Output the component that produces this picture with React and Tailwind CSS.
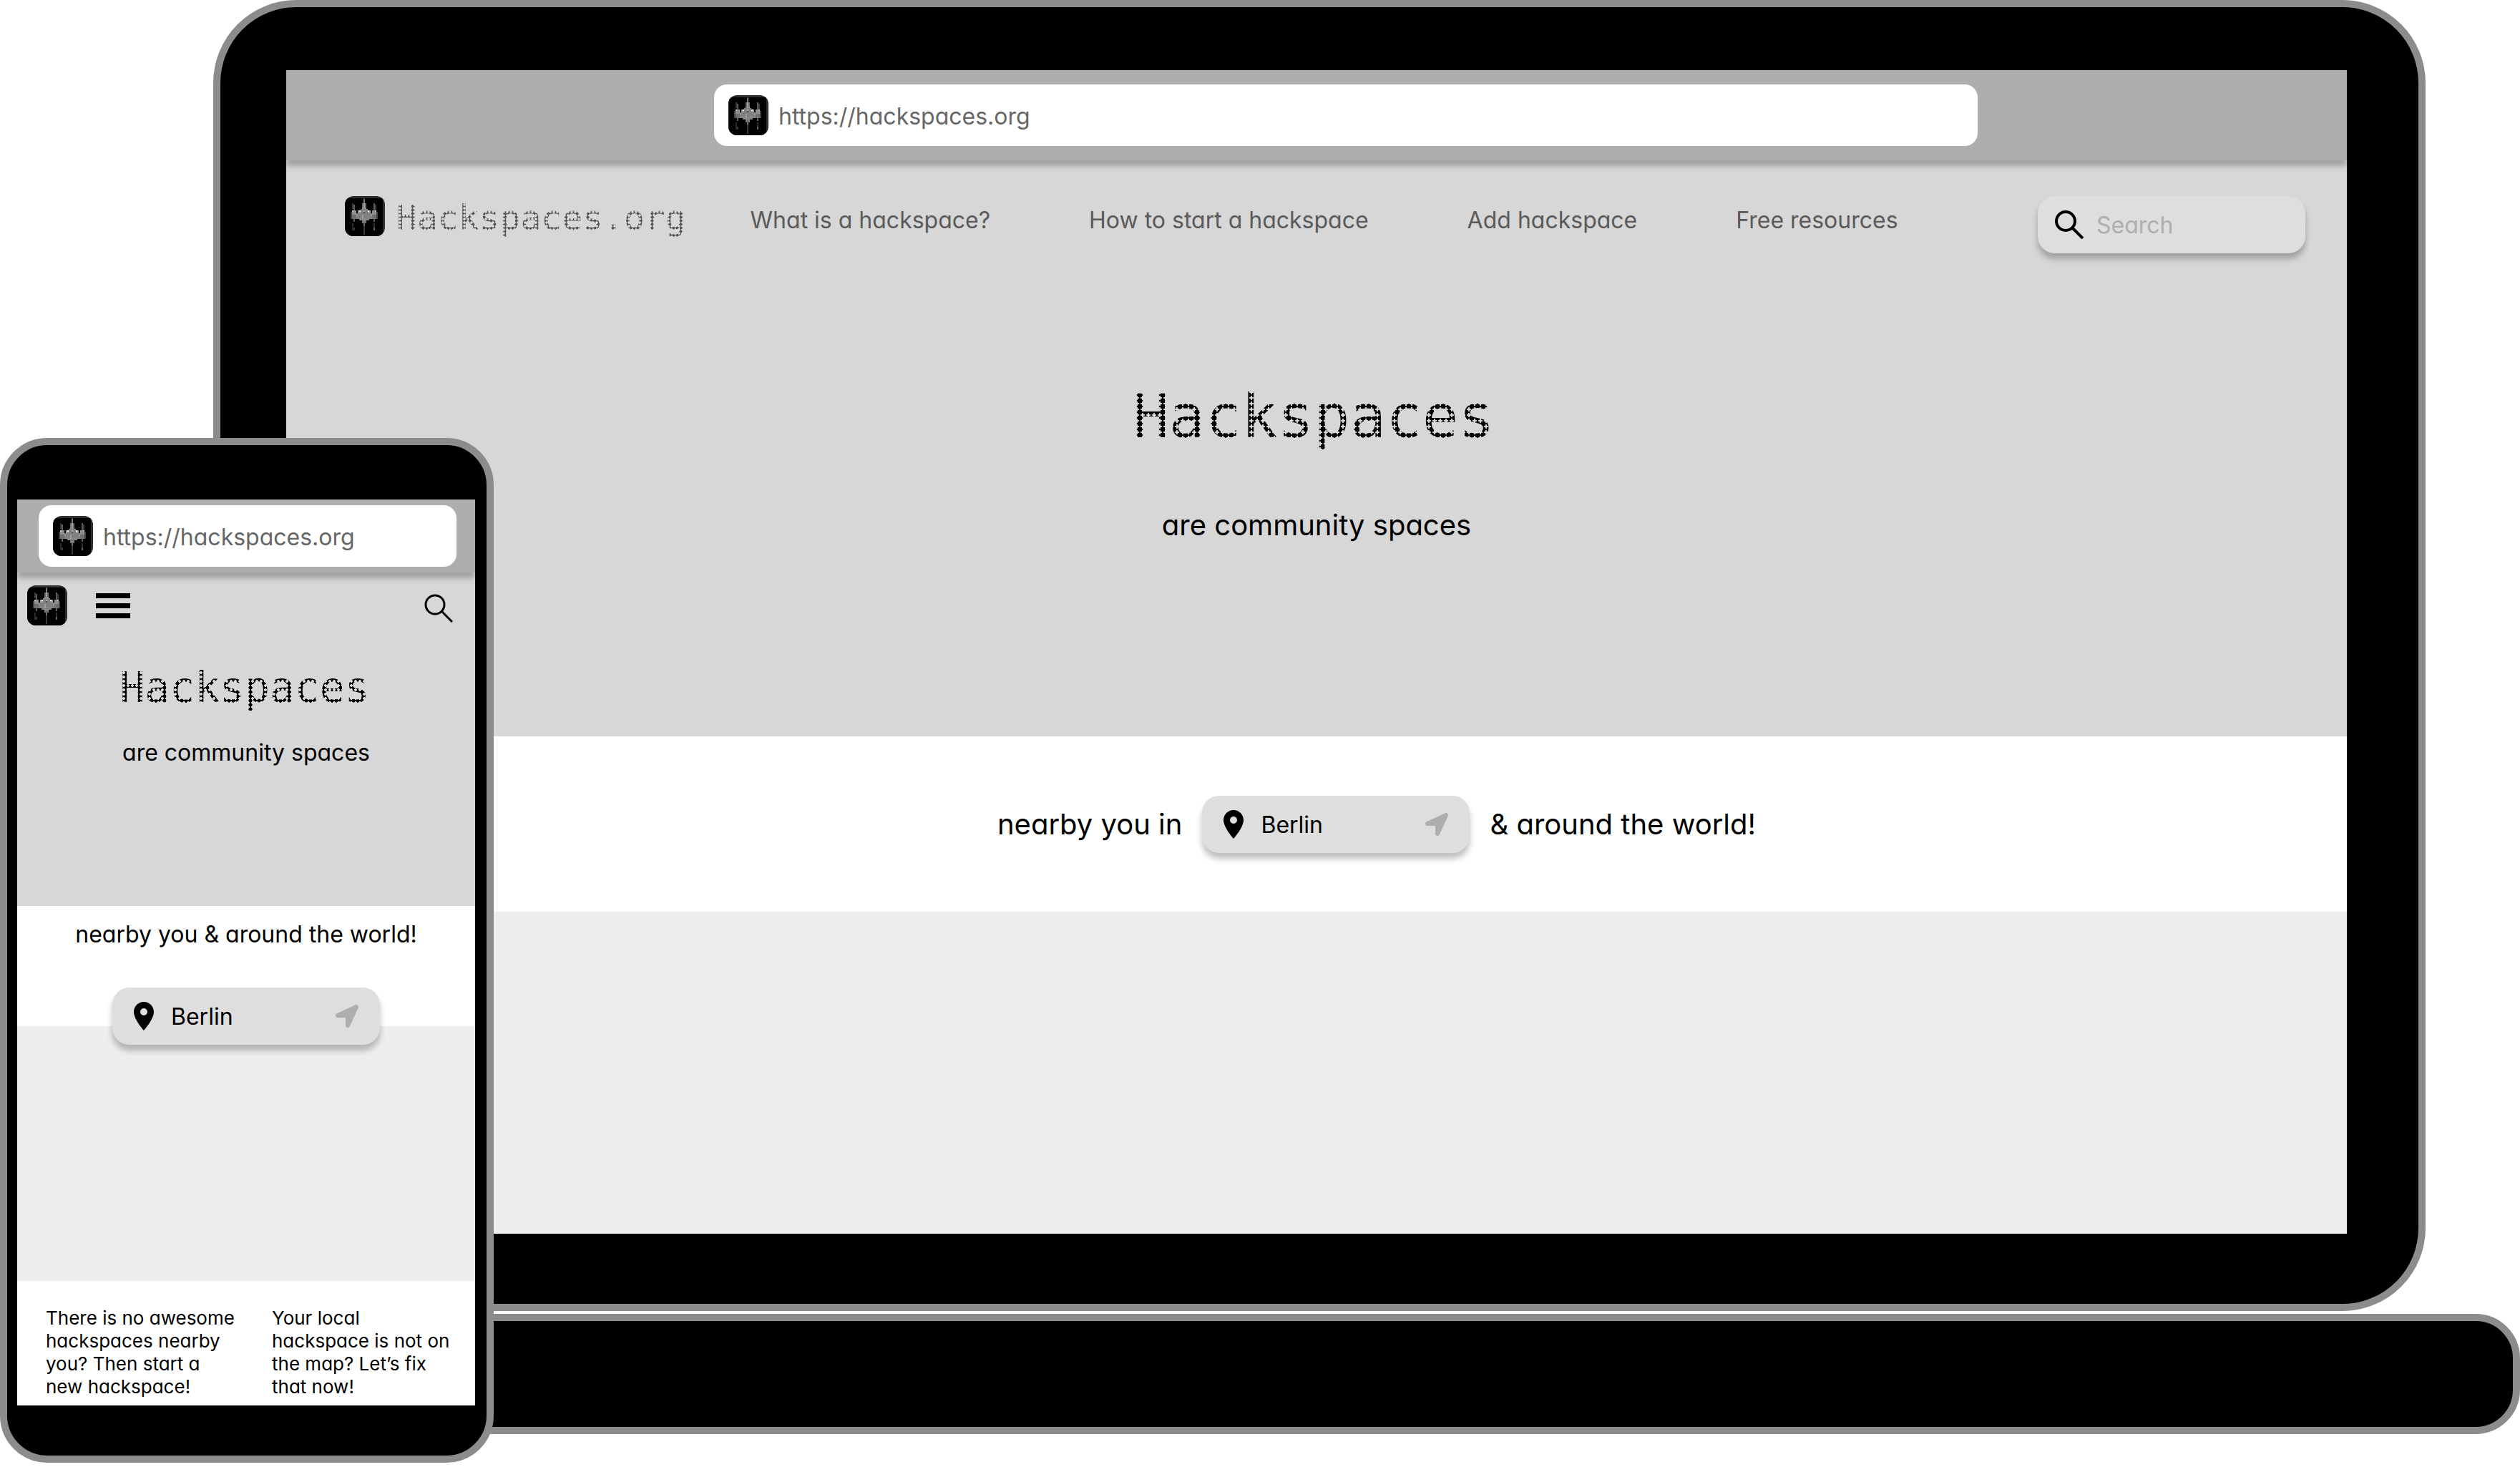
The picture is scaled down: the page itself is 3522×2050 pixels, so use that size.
const SHADOW = 'shadow-[0_8px_8px_rgba(0,0,0,0.25)]';

// Greyscale pixels of the logo mark: [x, y, width, height, fill]
const LOGO_PIXELS = [
  [13, 1, 1, 26, '#3a3837'],
  [13, 2, 1, 6, '#7b7b7b'],
  [12, 5, 3, 4, '#6c6c6c'],
  [13, 5, 1, 5, '#9c9c9c'],
  [12, 8, 3, 2, '#8d8d8d'],
  [11, 9, 5, 6, '#808080'],
  [12, 14, 3, 5, '#7a7a7a'],
  [13, 18, 1, 3, '#6a6a6a'],
  [5, 5, 1, 4, '#3a3a3a'],
  [6, 6, 1, 12, '#5c5c5c'],
  [20, 5, 1, 13, '#5c5c5c'],
  [21, 6, 1, 4, '#3a3a3a'],
  [5, 10, 3, 3, '#8e8e8e'],
  [19, 10, 3, 3, '#8e8e8e'],
  [4, 11, 1, 5, '#444444'],
  [22, 11, 1, 5, '#444444'],
  [5, 13, 3, 3, '#707070'],
  [19, 13, 3, 3, '#707070'],
  [8, 12, 3, 4, '#808080'],
  [16, 12, 3, 4, '#808080'],
  [9, 10, 2, 2, '#9c9c9c'],
  [16, 10, 2, 2, '#9c9c9c'],
  [10, 15, 7, 2, '#858585'],
  [10, 10, 1, 1, '#f0f0f0'],
  [16, 10, 1, 1, '#f0f0f0'],
  [5, 10, 1, 1, '#c5c5c5'],
  [21, 10, 1, 1, '#b5b5b5'],
  [13, 11, 1, 1, '#4d4d4d'],
  [13, 10, 1, 1, '#b0b0b0'],
  [8, 13, 1, 1, '#9a9a9a'],
  [18, 13, 1, 1, '#9a9a9a'],
  [12, 13, 1, 3, '#9e9e9e'],
  [5, 19, 1, 5, '#2c2c2c'],
  [6, 22, 1, 2, '#363636'],
  [20, 19, 1, 3, '#2c2c2c'],
  [20, 22, 1, 2, '#626262'],
];

function Logo() {
  return (
    <svg viewBox="0 0 28 28" className="size-14 shrink-0 rounded-xl" shapeRendering="crispEdges" aria-hidden="true">
      <rect width="28" height="28" fill="#2d2d2f" />
      <rect y="1.5" width="26.5" height="26.5" fill="#020202" />
      {LOGO_PIXELS.map(([x, y, w, h, fill], i) => (
        <rect key={i} x={x} y={y} width={w} height={h} fill={fill} />
      ))}
    </svg>
  );
}

function SearchIcon({ strokeWidth = 4 }) {
  return (
    <svg viewBox="0 0 40 40" className="size-10 shrink-0" fill="none" stroke="#000" strokeWidth={strokeWidth} aria-hidden="true">
      <circle cx="15" cy="15" r="13" />
      <path d="M24.5 24.5L39 39" />
    </svg>
  );
}

function AddressBar() {
  return (
    <div className="flex min-w-0 grow items-center gap-3.5 rounded-[18px] bg-white px-5 py-[15px]">
      <Logo />
      <input
        type="text"
        aria-label="Address"
        defaultValue="https://hackspaces.org"
        className="h-14 w-full min-w-0 bg-transparent pt-0.5 text-[32px] leading-10 text-[#666666] outline-none"
      />
    </div>
  );
}

function PlaceField() {
  return (
    <div className={`relative flex h-20 w-[374px] shrink-0 items-center rounded-3xl bg-[#dedede] px-[30px] ${SHADOW}`}>
      <svg viewBox="0 0 28 40" className="h-10 w-7 shrink-0" aria-hidden="true">
        <path
          fillRule="evenodd"
          d="M14 0C6.3 0 0 6.3 0 14c0 10.5 14 26 14 26s14-15.5 14-26C28 6.3 21.7 0 14 0zm0 19a5 5 0 1 1 0-10 5 5 0 0 1 0 10z"
        />
      </svg>
      <input
        type="text"
        aria-label="City"
        defaultValue="Berlin"
        className="ml-6 h-14 min-w-0 grow bg-transparent text-[32px] leading-10 text-black outline-none"
      />
      <button type="button" aria-label="Use my location" className="shrink-0">
        <svg viewBox="0 0 512 512" className="size-8" fill="#aeaeae" aria-hidden="true">
          <path d="M444.52 3.52L28.74 195.42c-47.97 22.39-31.98 92.75 19.19 92.75h175.91v175.91c0 51.17 70.36 67.17 92.75 19.19l191.9-415.78c15.99-38.39-25.59-79.97-63.97-63.97z" />
        </svg>
      </button>
    </div>
  );
}

const NAV = ['What is a hackspace?', 'How to start a hackspace', 'Add hackspace', 'Free resources'];

function Laptop() {
  return (
    <div>
      <div className="mr-[132px] ml-[298px] rounded-[116px] border-10 border-[#8c8c8c] bg-black pt-[88px] pr-[100px] pb-[98px] pl-[92px]">
        <div className="overflow-hidden bg-white">
          <div className={`relative flex bg-[#aeaeae] py-5 pr-[516px] pl-[598px] ${SHADOW}`}>
            <AddressBar />
          </div>
          <div className="bg-[#d7d7d7] pb-[271px]">
            <header className="flex items-start pt-[50px] pr-[58px] pl-[82px]">
              <a href="#home" className="flex gap-4">
                <Logo />
                <span className="mt-0.5 bg-[radial-gradient(circle,#565656_60%,transparent_64%)] bg-[length:5px_5px] bg-clip-text font-['DejaVu_Sans_Mono',monospace] text-[48px] leading-14 text-transparent">
                  Hackspaces.org
                </span>
              </a>
              <nav className="mt-3.5 ml-[90px] flex gap-[138px] text-[32px] leading-10 whitespace-nowrap text-[#5a5a5a]">
                {NAV.map((label) => (
                  <a key={label} href="#nav">{label}</a>
                ))}
              </nav>
              <div className={`ml-auto flex h-20 w-[374px] shrink-0 items-center gap-4.5 rounded-3xl bg-[#dedede] px-6 ${SHADOW}`}>
                <SearchIcon />
                <input
                  type="search"
                  aria-label="Search"
                  placeholder="Search"
                  className="h-14 min-w-0 grow bg-transparent text-[32px] leading-10 outline-none placeholder:text-[#aeaeae]"
                />
              </div>
            </header>
            <div className="mt-[180px] flex flex-col items-center gap-20">
              <h1 className="mr-2 bg-[radial-gradient(circle,#000_62%,transparent_68%)] bg-[length:8px_8px] bg-[position:6px_6px] bg-clip-text font-['DejaVu_Sans_Mono',monospace] text-[84px] leading-24 text-transparent">
                Hackspaces
              </h1>
              <p className="text-[40px] leading-12">are community spaces</p>
            </div>
          </div>
          <div className="-mt-px flex items-center justify-center gap-7 pt-[84px] pb-[82px] pl-[168px] text-[40px] leading-12">
            <span>nearby you in</span>
            <PlaceField />
            <span>&amp; around the world!</span>
          </div>
          <div className="h-[450px] bg-[#eeeeee]" />
        </div>
      </div>
      <div className="mt-1 ml-[166px] h-[168px] rounded-[62px] border-10 border-[#8c8c8c] bg-black" />
    </div>
  );
}

function Phone() {
  return (
    <div className="absolute top-[612px] left-0 w-[690px] rounded-[66px] border-10 border-[#8c8c8c] bg-black pt-[76px] pr-4 pb-[70px] pl-3.5">
      <div className="bg-white">
        <div className="overflow-hidden bg-[#d7d7d7]">
          <div className={`flex bg-[#aeaeae] py-2 pr-[26px] pl-[30px] ${SHADOW}`}>
            <AddressBar />
          </div>
          <header className="flex items-center pt-[18px] pr-[31px] pl-3.5">
            <Logo />
            <button type="button" aria-label="Menu" className="ml-10 flex w-12 flex-col gap-[7px]">
              <span className="h-[7px] bg-black" />
              <span className="h-[7px] bg-black" />
              <span className="h-[7px] bg-black" />
            </button>
            <button type="button" aria-label="Search" className="mt-2 ml-auto">
              <SearchIcon strokeWidth={3} />
            </button>
          </header>
          <div className="mt-[54px] flex flex-col items-center gap-[38px] pb-[194px]">
            <h2 className="mr-1 bg-[radial-gradient(circle,#000_60%,transparent_64%)] bg-[length:6px_6px] bg-clip-text font-['DejaVu_Sans_Mono',monospace] text-[58px] leading-[66px] text-transparent">
              Hackspaces
            </h2>
            <p className="text-[32px] leading-10">are community spaces</p>
          </div>
        </div>
        <div className="flex flex-col items-center pt-5">
          <p className="mb-[54px] text-[32px] leading-10">nearby you &amp; around the world!</p>
          <PlaceField />
        </div>
        <div className="-mt-[26px] h-[356px] bg-[#eeeeee]" />
        <div className="grid grid-cols-2 gap-[52px] pt-9 pr-5 pb-[10px] pl-10 text-[26px] leading-8">
          <p>There is no awesome hackspaces nearby you? Then start a new hackspace!</p>
          <p>Your local hackspace is not on the map? Let’s fix that now!</p>
        </div>
      </div>
    </div>
  );
}

export default function App() {
  return (
    <main className="relative min-h-screen bg-white font-[Inter,sans-serif] text-black [font-feature-settings:'cv11']">
      <Laptop />
      <Phone />
    </main>
  );
}
